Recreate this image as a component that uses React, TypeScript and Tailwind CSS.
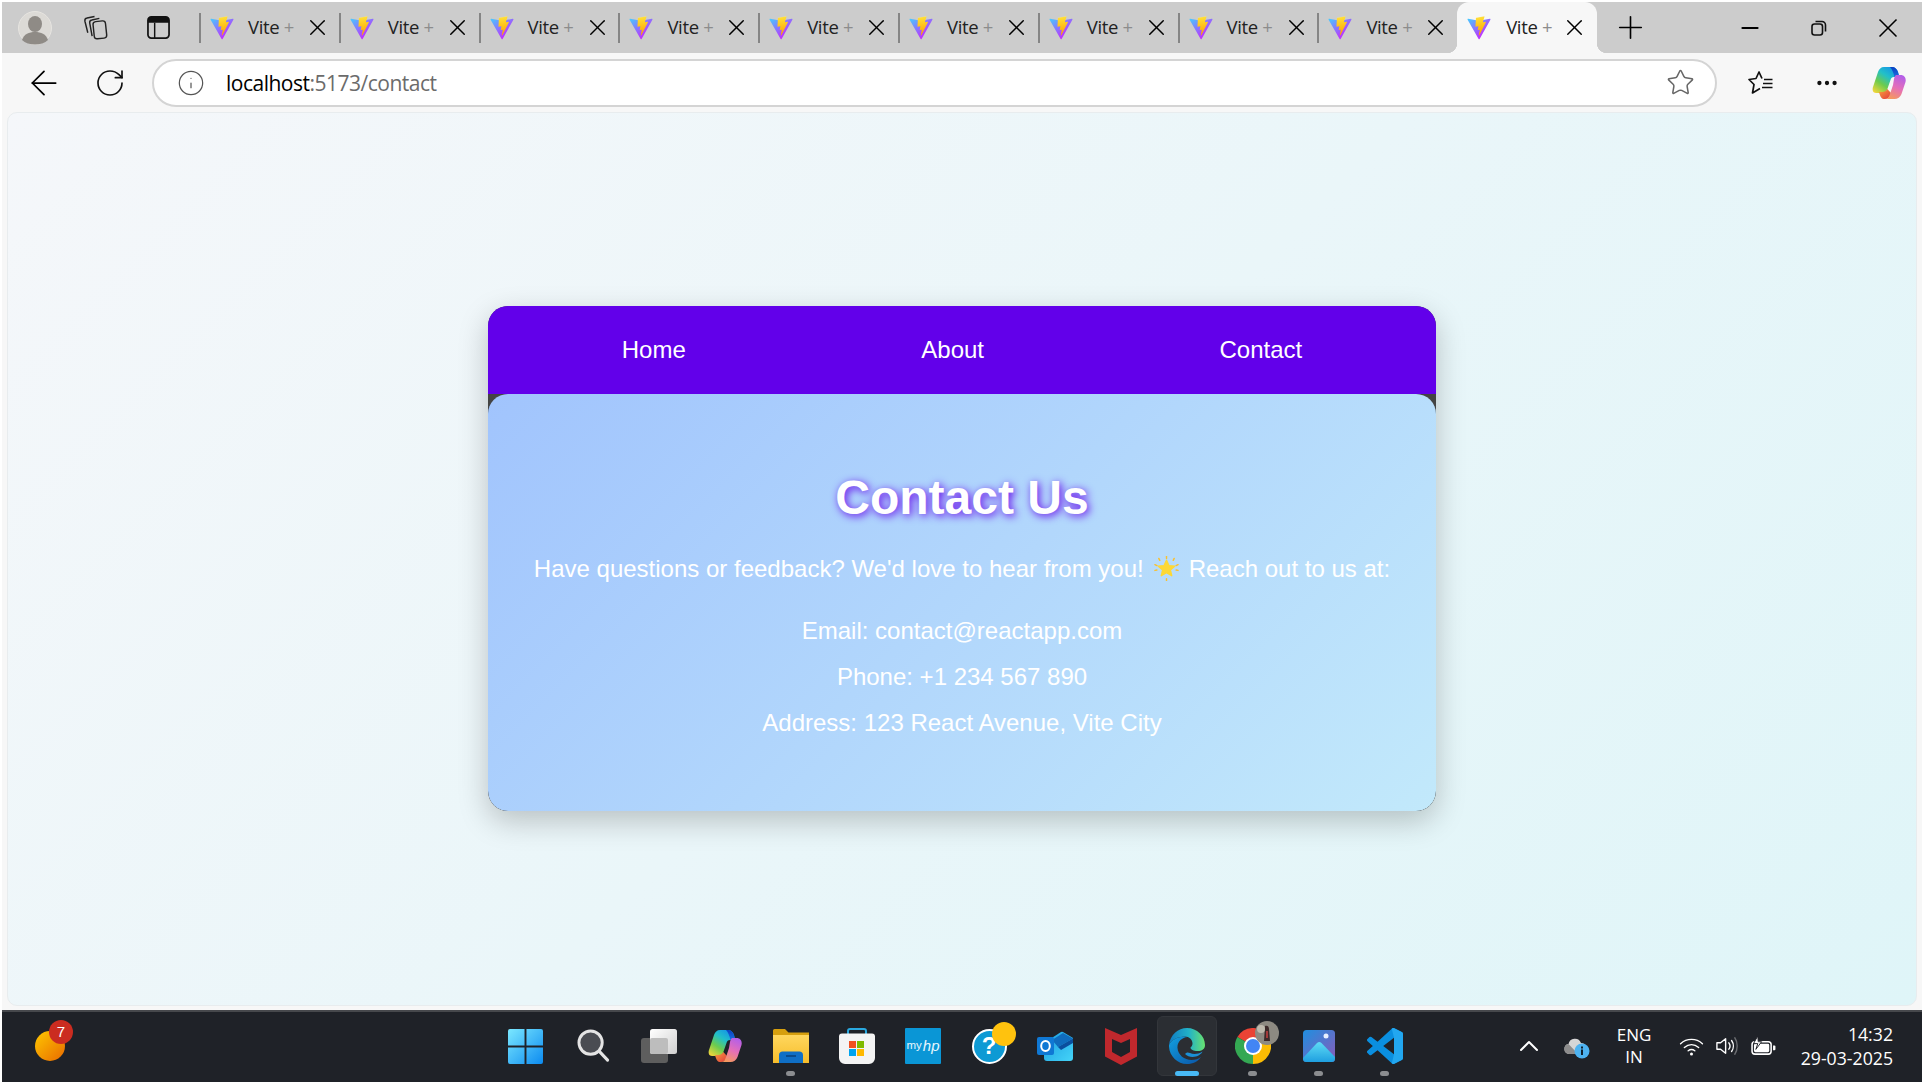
import React from 'react';
import { ArrowLeft, RotateCw, Info, Star, X, Plus, Minus, Ellipsis, ChevronUp } from 'lucide-react';

const chromeFont = "font-['Open_Sans','Noto_Sans',sans-serif]";

const ViteLogo = () => (
  <svg viewBox="0 0 410 404" className="w-[24px] h-[24px] shrink-0">
    <defs>
      <linearGradient id="viteA" x1="6" y1="33" x2="235" y2="344" gradientUnits="userSpaceOnUse">
        <stop stopColor="#41D1FF" />
        <stop offset="1" stopColor="#BD34FE" />
      </linearGradient>
      <linearGradient id="viteB" x1="194" y1="8" x2="236" y2="293" gradientUnits="userSpaceOnUse">
        <stop stopColor="#FFEA83" />
        <stop offset="0.08" stopColor="#FFDD35" />
        <stop offset="1" stopColor="#FFA800" />
      </linearGradient>
    </defs>
    <path d="M399.641 59.5246L215.643 388.545C211.844 395.338 202.084 395.378 198.228 388.618L10.5817 59.5563C6.38087 52.1896 12.6802 43.2665 21.0281 44.7586L205.223 77.6824C206.398 77.8924 207.601 77.8904 208.776 77.6763L389.119 44.8058C397.439 43.2894 403.768 52.1434 399.641 59.5246Z" fill="url(#viteA)" />
    <path d="M292.965 1.5744L156.801 28.2552C154.563 28.6937 152.906 30.5903 152.771 32.8664L144.395 174.33C144.198 177.662 147.258 180.248 150.51 179.498L188.42 170.749C191.967 169.931 195.172 173.055 194.443 176.622L183.18 231.775C182.422 235.487 185.907 238.661 189.532 237.56L212.947 230.446C216.577 229.344 220.065 232.527 219.297 236.242L201.398 322.875C200.278 328.294 207.486 331.249 210.492 326.603L212.5 323.5L323.454 102.072C325.312 98.3645 322.108 94.137 318.036 94.9228L279.014 102.454C275.347 103.161 272.227 99.746 273.262 96.1583L298.731 7.86689C299.767 4.27314 296.636 0.855181 292.965 1.5744Z" fill="url(#viteB)" />
  </svg>
);

const TabLabel = () => (
  <span className="w-[50px] pb-[2px] text-[18.5px] tracking-[-0.35px] whitespace-nowrap text-[#222]">Vite <span className="text-[#8c8c8c]">+</span></span>
);

const Tab = ({ active }: { active?: boolean }) => {
  if (active) {
    return (
      <div className="relative flex items-center w-[140px] h-full shrink-0 bg-[#f7f7f7] rounded-t-[12px] pl-[10px]">
        <span className="absolute -left-[10px] bottom-0 w-[10px] h-[10px] bg-[radial-gradient(circle_at_0_0,#cccccc_10px,#f7f7f7_10.5px)]" />
        <span className="absolute -right-[10px] bottom-0 w-[10px] h-[10px] bg-[radial-gradient(circle_at_100%_0,#cccccc_10px,#f7f7f7_10.5px)]" />
        <ViteLogo />
        <span className="ml-[15px] flex items-center"><TabLabel /></span>
        <X size={27} strokeWidth={1.3} className="ml-[5px] text-black" />
      </div>
    );
  }
  return (
    <div className="flex items-center w-[139.8px] h-full shrink-0">
      <span className="w-[2px] h-[30px] bg-[#858585] shrink-0" />
      <span className="ml-[9px] shrink-0"><ViteLogo /></span>
      <span className="ml-[14px] flex items-center"><TabLabel /></span>
      <X size={27} strokeWidth={1.3} className="ml-[6px] text-black" />
    </div>
  );
};

const Profile = () => (
  <svg viewBox="0 0 34 34" className="w-[34px] h-[34px]">
    <circle cx="17" cy="17" r="16.5" fill="#dcdad6" stroke="#e6e4e0" />
    <ellipse cx="17" cy="13" rx="7" ry="8" fill="#8f8b86" />
    <path d="M4 29c2-6 7-8 13-8s11 2 13 8c-3 3-8 4.5-13 4.5S7 32 4 29Z" fill="#8f8b86" />
  </svg>
);

const Collections = () => (
  <svg viewBox="0 0 26 26" className="w-[25px] h-[25px]" fill="none" stroke="#222" strokeWidth="1.5" strokeLinejoin="round">
    <rect x="11" y="6.5" width="13" height="18" rx="3" transform="rotate(-6 17 15)" />
    <path d="M9.5 22 7 8.5C6.7 6.8 7.6 5.5 9.2 5.2L17 3.5" />
    <path d="M5 18.5 2 6.5C1.7 4.8 2.600 3.500 4.200 3.200L12 1.500" />
  </svg>
);

const VerticalTabs = () => (
  <svg viewBox="0 0 24 24" className="w-[23px] h-[23px]">
    <rect x="1" y="1" width="22" height="22" rx="3.5" fill="none" stroke="#111" strokeWidth="1.8" />
    <path d="M1 4.5A3.5 3.5 0 0 1 4.5 1h15A3.5 3.5 0 0 1 23 4.5V7H1Z" fill="#111" />
    <path d="M8 7v16" stroke="#111" strokeWidth="1.5" />
  </svg>
);

const Restore = () => (
  <svg viewBox="0 0 16 16" className="w-[16px] h-[16px]" fill="none" stroke="#111" strokeWidth="1.6">
    <rect x="1" y="4" width="10.5" height="11" rx="2.5" />
    <path d="M4.5 1.5h6.5a3.5 3.5 0 0 1 3.5 3.5v6.5" />
  </svg>
);

const Favorites = () => (
  <svg viewBox="0 0 25 23" className="w-[25px] h-[23px]" fill="none" stroke="#111" strokeWidth="1.7" strokeLinejoin="round">
    <path d="M14 7.5 11 1 8 7.5 1 8.5 6 13.5 4.5 22 12 17.5" />
    <path d="M16 8.5h8.5M15 12.5h9.5M14 16.5h10.5" />
  </svg>
);

const Copilot = ({ id, size }: { id: string; size: number }) => (
  <svg viewBox="0 0 34 34" style={{ width: size, height: size }}>
    <defs>
      <linearGradient id={id + 'a'} x1="0.8" y1="0" x2="0.1" y2="1">
        <stop stopColor="#1490ea" />
        <stop offset="0.35" stopColor="#22c0c8" />
        <stop offset="0.65" stopColor="#6ccb4e" />
        <stop offset="1" stopColor="#f4d63a" />
      </linearGradient>
      <linearGradient id={id + 'b'} x1="0.7" y1="0" x2="0.3" y2="1">
        <stop stopColor="#b45fe8" />
        <stop offset="0.5" stopColor="#e56fb8" />
        <stop offset="1" stopColor="#f59a5c" />
      </linearGradient>
      <linearGradient id={id + 'c'} x1="0" y1="0" x2="0" y2="1">
        <stop stopColor="#0a3fc0" />
        <stop offset="1" stopColor="#1c6fe0" />
      </linearGradient>
      <linearGradient id={id + 'd'} x1="0" y1="0" x2="1" y2="1">
        <stop stopColor="#f8a33c" />
        <stop offset="1" stopColor="#e2383e" />
      </linearGradient>
    </defs>
    <path d="M12 1H20C23 1 25 3 26 6L27 11H22C20 11 19 12 18.5 14L15 24C14 26 12 27 10 27H4C1 27 0 24 1 21L6 6C7 3 9 1 12 1Z" fill={`url(#${id}a)`} />
    <path d="M18 1H20C23 1 25 3 26 6L27.5 11H22.5C21.5 7 20 3 18 1Z" fill={`url(#${id}c)`} />
    <path d="M7 26H10C12.5 26 14.3 25 15.3 23L19 27C18 31 16 33 13 33H11.5C9.5 33 8 30 7 26Z" fill={`url(#${id}d)`} />
    <path d="M24 9H29C32 9 34.5 12 33.5 16L29.5 28C28.5 31 25.5 33 22.5 33H13C16 33 17 31 18 28L21 19 22 13C22.3 11 23 10 24 9Z" fill={`url(#${id}b)`} />
  </svg>
);

const StarEmoji = () => (
  <svg viewBox="0 0 26 26" className="inline-block w-[25px] h-[25px] mx-[10px]">
    <path d="M13 4.5 15.5 10l6 .5-4.500 4 1.400 6L13 17.300 7.600 20.500l1.400-6-4.500-4 6-.5Z" fill="#fdd835" stroke="#fdd835" strokeWidth="1.5" strokeLinejoin="round" />
    <path d="M13 0v2.500M13 23.500V26M1 9l2 1M23 10l2-1M1 15l2-.5M23 14.500l2 .5M5 2.500l1 2M21 2.500l-1 2" stroke="#fbc02d" strokeWidth="1.5" strokeLinecap="round" />
  </svg>
);

const WindowsLogo = () => (
  <svg viewBox="0 0 36 36" className="w-[35px] h-[35px] mr-[3px]">
    <defs>
      <linearGradient id="winG" x1="0" y1="0" x2="1" y2="1">
        <stop stopColor="#7be8ff" />
        <stop offset="1" stopColor="#0c8bf0" />
      </linearGradient>
    </defs>
    <path d="M2 0h15v17H0V2a2 2 0 0 1 2-2Zm17 0h15a2 2 0 0 1 2 2v15H19ZM0 19h17v17H2a2 2 0 0 1-2-2Zm19 0h17v15a2 2 0 0 1-2 2H19Z" fill="url(#winG)" />
  </svg>
);

const SearchGlyph = () => (
  <svg viewBox="0 0 34 36" className="w-[33px] h-[35px]">
    <circle cx="14" cy="14" r="12" fill="#4a4c52" stroke="#e4e4e4" strokeWidth="3" />
    <path d="M23 23 31.5 32" stroke="#e4e4e4" strokeWidth="3.2" strokeLinecap="round" />
  </svg>
);

const TaskView = () => (
  <svg viewBox="0 0 36 34" className="w-[36px] h-[34px]">
    <defs>
      <linearGradient id="tvA" x1="0" y1="0" x2="1" y2="1">
        <stop stopColor="#ffffff" />
        <stop offset="1" stopColor="#d0d0d0" />
      </linearGradient>
    </defs>
    <rect x="0" y="9" width="27" height="25" rx="3" fill="#5e5e5e" />
    <rect x="9" y="0" width="27" height="25" rx="2.5" fill="url(#tvA)" />
    <rect x="9" y="9" width="18" height="16" rx="2" fill="#bdbdbd" />
  </svg>
);

const Folder = () => (
  <svg viewBox="0 0 36 34" className="w-[36px] h-[34px]">
    <defs>
      <linearGradient id="fdA" x1="0" y1="0" x2="0" y2="1">
        <stop stopColor="#ffd75e" />
        <stop offset="1" stopColor="#f6bd2b" />
      </linearGradient>
    </defs>
    <path d="M1.5 0H12l3.5 3.5H36V8H0V1.5A1.5 1.5 0 0 1 1.5 0Z" fill="#d69f0e" />
    <path d="M0 6h36v28H0Z" fill="url(#fdA)" />
    <path d="M6 34V26c0-2 1.5-3.5 3.5-3.5h17c2 0 3.5 1.5 3.5 3.5v8Z" fill="#0f6fc6" />
    <path d="M13 27h10" stroke="#0a3f78" strokeWidth="1.5" />
  </svg>
);

const Store = () => (
  <svg viewBox="0 0 36 36" className="w-[36px] h-[36px]">
    <path d="M9 6V3a2 2 0 0 1 2-2h14a2 2 0 0 1 2 2v3" fill="none" stroke="#2aa9e0" strokeWidth="2" />
    <path d="M0 8.5A3 3 0 0 1 3 5.500h30a3 3 0 0 1 3 3V30a6 6 0 0 1-6 6H6a6 6 0 0 1-6-6Z" fill="#f4f4f4" />
    <rect x="10" y="13" width="7" height="7" fill="#f25022" />
    <rect x="18" y="13" width="7" height="7" fill="#7fba00" />
    <rect x="10" y="21" width="7" height="7" fill="#00a4ef" />
    <rect x="18" y="21" width="7" height="7" fill="#ffb900" />
  </svg>
);

const MyHp = () => (
  <div className="flex items-center justify-center w-[36px] h-[36px] bg-[#0a96d6] rounded-[1px] text-[#e8f6fd] text-[11.5px] font-['Liberation_Sans',sans-serif]">
    my<span className="italic text-[15px] ml-[1px]">hp</span>
  </div>
);

const Help = () => (
  <div className="relative">
    <div className="flex items-center justify-center w-[35px] h-[35px] rounded-full bg-[#0e9ad4] border-2 border-white text-white text-[24px] font-bold font-['Liberation_Sans',sans-serif]">?</div>
    <span className="absolute -top-[7px] -right-[9px] w-[24px] h-[24px] rounded-full bg-[#ffc20e]" />
  </div>
);

const Outlook = () => (
  <svg viewBox="0 0 36 32" className="w-[36px] h-[32px]">
    <defs>
      <linearGradient id="olA" x1="0" y1="0" x2="1" y2="1">
        <stop stopColor="#1a9be0" />
        <stop offset="1" stopColor="#45d4f8" />
      </linearGradient>
    </defs>
    <path d="M7 13 24 2a2 2 0 0 1 2 0l10 6v20a3 3 0 0 1-3 3H10a3 3 0 0 1-3-3Z" fill="url(#olA)" />
    <path d="M15 10 26 3l10 5.5L21 17Z" fill="#0f6cbd" />
    <path d="M21 17l15-8.500V13L24 20Z" fill="#0b4f9e" />
    <rect x="0" y="7" width="17" height="18" rx="2" fill="#0f78d4" />
    <ellipse cx="8.5" cy="16" rx="4.3" ry="5" fill="none" stroke="#fff" strokeWidth="2" />
  </svg>
);

const McAfee = () => (
  <svg viewBox="0 0 32 37" className="w-[32px] h-[37px]">
    <path fillRule="evenodd" d="M0 0 16 7 32 0V28.5L16 37 0 28.5ZM7 11 16 15 25 11V24L16 29 7 24Z" fill="#c0282d" />
  </svg>
);

const Edge = () => (
  <svg viewBox="0 0 36 36" className="w-[36px] h-[36px]">
    <defs>
      <linearGradient id="edA" x1="0" y1="0.5" x2="1" y2="0.5">
        <stop stopColor="#0f7cc4" />
        <stop offset="0.55" stopColor="#22b2c8" />
        <stop offset="1" stopColor="#68e26f" />
      </linearGradient>
      <linearGradient id="edB" x1="0" y1="0" x2="1" y2="1">
        <stop stopColor="#12a0df" />
        <stop offset="1" stopColor="#0a55a8" />
      </linearGradient>
    </defs>
    <path d="M0 17C1 7 9 0 18 0c10 0 18 8 18 17 0 4-3 6-7.500 6-4 0-7-1.500-7-3.500 1-1 2-2 2-4 0-4-3.500-7-7.500-7C9 8.500 2 12 0 17Z" fill="url(#edA)" />
    <path d="M0 17c2-5 9-8.500 15.500-8.500 1 0 2 .2 3 .6C13 9.500 8 14 8.500 20c.4 7 7 12 14 12 4 0 7-1 9.500-3-3 4.500-8 7-14 7C8 36-.5 27 0 17Z" fill="url(#edB)" />
    <path d="M21 25c3 1.500 8 1.500 12.500-1.500-1 2.500-5 5.500-10 5.500-3 0-5.500-1-7.500-3 1-1.500 3-2 5-1Z" fill="#1a8fd6" />
  </svg>
);

const Chrome = () => (
  <div className="relative">
    <svg viewBox="0 0 36 36" className="w-[36px] h-[36px]">
      <path d="M18 18 2.4 9A18 18 0 0 1 33.6 9Z" fill="#ea4335" />
      <path d="M18 18 33.6 9A18 18 0 0 1 18 36Z" fill="#fbbc04" />
      <path d="M18 18 18 36A18 18 0 0 1 2.4 9Z" fill="#34a853" />
      <circle cx="18" cy="18" r="9" fill="#fff" />
      <circle cx="18" cy="18" r="7" fill="#4285f4" />
    </svg>
    <svg viewBox="0 0 24 24" className="absolute -top-[7px] -right-[8px] w-[24px] h-[24px]">
      <circle cx="12" cy="12" r="12" fill="#8d8a82" />
      <path d="M10 5c2-1 4 0 4 3l1 12H9Z" fill="#3c2a2a" />
      <path d="M11 10h2v7h-2Z" fill="#a33a3a" />
      <circle cx="6" cy="8" r="4" fill="#bdb9ad" />
    </svg>
  </div>
);

const Photos = () => (
  <svg viewBox="0 0 32 32" className="w-[32px] h-[32px]">
    <defs>
      <linearGradient id="phA" x1="0" y1="0" x2="1" y2="1">
        <stop stopColor="#1f8fe0" />
        <stop offset="1" stopColor="#8a5ab8" />
      </linearGradient>
      <linearGradient id="phB" x1="0" y1="0" x2="0" y2="1">
        <stop stopColor="#5fdcf5" />
        <stop offset="1" stopColor="#1f9fe0" />
      </linearGradient>
    </defs>
    <rect width="32" height="32" rx="3.5" fill="url(#phA)" />
    <circle cx="23" cy="6" r="2.5" fill="#e8f0ff" />
    <path d="M0 28 14 13c1.5-1.5 3-1.5 4.5 0L32 27v1.5A3.5 3.5 0 0 1 28.500 32h-25A3.500 3.500 0 0 1 0 28.500Z" fill="url(#phB)" />
  </svg>
);

const VSCode = () => (
  <svg viewBox="0 0 100 100" className="w-[36px] h-[36px]">
    <path d="M96.46 10.8 75.86.87a6.23 6.23 0 0 0-7.1 1.2L29.35 38.1 12.18 25.06a4.16 4.16 0 0 0-5.32.24L1.35 30.3a4.17 4.17 0 0 0 0 6.16L16.24 50 1.35 63.54a4.17 4.17 0 0 0 0 6.16l5.51 5a4.16 4.16 0 0 0 5.32.24L29.35 61.9l39.41 36.03a6.22 6.22 0 0 0 7.1 1.2l20.6-9.91A6.25 6.25 0 0 0 100 83.58V16.42a6.25 6.25 0 0 0-3.54-5.62ZM75 72.7 45.1 50 75 27.3Z" fill="#0a8fe0" />
    <path d="M68.76 2.07a6.23 6.23 0 0 1 7.1-1.2l20.6 9.93A6.25 6.25 0 0 1 100 16.42v67.16a6.25 6.25 0 0 1-3.54 5.64l-20.6 9.91a6.22 6.22 0 0 1-7.1-1.2L75 72.7V27.3Z" fill="#22a7f0" />
  </svg>
);

const CloudInfo = () => (
  <svg viewBox="0 0 26 22" className="w-[26px] h-[22px]">
    <path d="M5 17a5 5 0 0 1-.5-9.9A6.500 6.500 0 0 1 17 6a5 5 0 0 1 3 9v2Z" fill="#d6d6d6" />
    <path d="M5 17a5 5 0 0 1-.5-9.9L14 17Z" fill="#8d8d8d" />
    <circle cx="18" cy="14" r="7.5" fill="#4db2f0" />
    <rect x="17" y="12.5" width="2" height="5.5" fill="#10202c" />
    <rect x="17" y="9.5" width="2" height="2" fill="#10202c" />
  </svg>
);

const WifiGlyph = () => (
  <svg viewBox="0 0 26 20" className="w-[25px] h-[19px]" fill="none" stroke="#fff" strokeWidth="1.5" strokeLinecap="round">
    <path d="M1.5 7C8 1 18 1 24.5 7" />
    <path d="M5.5 11C10 7 16 7 20.5 11" />
    <path d="M9.5 14.5C11.5 13 14.5 13 16.5 14.5" />
    <circle cx="13" cy="18" r="1.6" fill="#fff" stroke="none" />
  </svg>
);

const Speaker = () => (
  <svg viewBox="0 0 24 22" className="w-[24px] h-[22px]" fill="none" stroke="#fff" strokeWidth="1.5" strokeLinejoin="round">
    <path d="M1 7.5h4L10.5 3v16L5 14.5H1Z" />
    <path d="M14 7.5c1.500 2 1.500 5 0 7" strokeLinecap="round" />
    <path d="M17 5c2.500 3.500 2.500 8.500 0 12" strokeLinecap="round" />
    <path d="M20.5 2c3.500 5 3.500 13 0 18" strokeLinecap="round" stroke="#6a6c70" />
  </svg>
);

const Battery = () => (
  <svg viewBox="0 0 26 22" className="w-[25px] h-[21px]" fill="none">
    <rect x="1" y="6" width="20" height="13" rx="3" stroke="#fff" strokeWidth="1.6" />
    <rect x="3" y="8" width="16" height="9" rx="1.5" fill="#fff" />
    <path d="M23 10h1.5a1 1 0 0 1 1 1v3a1 1 0 0 1-1 1H23Z" fill="#fff" />
    <path d="M7 0 2.5 8H7l-2 6 6-8H7.5Z" fill="#fff" stroke="#1f2228" strokeWidth="1" />
  </svg>
);

const TaskIcon = ({ children, mark, active }: { children: React.ReactNode; mark?: boolean; active?: boolean }) => (
  <div className="relative flex items-center justify-center w-[66px] h-[60px] shrink-0">
    {active && <span className="absolute inset-y-0 left-[3px] right-[3px] rounded-[6px] bg-[#2b2e33] border border-[#33363b]" />}
    <span className="relative flex">{children}</span>
    {mark && <span className="absolute bottom-[0px] left-[28px] w-[9px] h-[5px] rounded-full bg-[#8b8d90]" />}
    {active && <span className="absolute bottom-[0px] left-[21px] w-[24px] h-[5px] rounded-full bg-[#48b9f5]" />}
  </div>
);

export default function App() {
  return (
    <div className={`flex flex-col w-[1924px] h-[1084px] overflow-hidden bg-white p-[2px] ${chromeFont}`}>
      {/* tab strip */}
      <div className="flex items-center h-[51px] shrink-0 bg-[#cccccc]">
        <div className="flex items-center w-[197px] shrink-0">
          <div className="flex justify-center w-[66px]"><Profile /></div>
          <div className="flex justify-center w-[54px]"><Collections /></div>
          <div className="flex justify-center w-[72px]"><VerticalTabs /></div>
        </div>
        {Array.from({ length: 9 }).map((_, i) => <Tab key={i} />)}
        <Tab active />
        <div className="flex justify-center w-[67px] shrink-0"><Plus size={37} strokeWidth={1.05} className="text-black" /></div>
        <div className="ml-auto flex items-center">
          <div className="flex justify-center w-[69px]"><Minus size={26} strokeWidth={1.9} className="text-black" /></div>
          <div className="flex justify-center w-[69px]"><Restore /></div>
          <div className="flex justify-center w-[69px]"><X size={32} strokeWidth={1.25} className="text-black" /></div>
        </div>
      </div>

      {/* address bar row */}
      <div className="flex items-center h-[59px] shrink-0 bg-[#f7f7f7]">
        <div className="flex justify-center w-[84px]"><ArrowLeft size={40} strokeWidth={1.05} className="text-black" /></div>
        <div className="flex justify-center w-[48px]"><RotateCw size={32} strokeWidth={1.25} className="text-[#111]" /></div>
        <div className="flex items-center ml-[18px] w-[1565px] h-[48px] bg-white border-2 border-[#d4d4d4] rounded-full pl-[23px] pr-[20px]">
          <Info size={28} strokeWidth={1.05} className="text-[#555]" />
          <span className="ml-[21px] pt-[2px] text-[21px] tracking-[-0.5px] text-black">localhost<span className="text-[#6b6b6b]">:5173/contact</span></span>
          <Star size={29} strokeWidth={1.25} className="ml-auto text-[#666]" />
        </div>
        <div className="flex justify-center w-[86px]"><Favorites /></div>
        <div className="flex justify-center w-[48px]"><Ellipsis size={26} strokeWidth={2} className="text-[#111]" /></div>
        <div className="w-[71px] pl-[21px]"><Copilot id="copA" size={34} /></div>
      </div>

      {/* page */}
      <div className="flex-1 min-h-0 bg-[#f7f7f7] pl-[5px] pr-[5px] pb-[4px]">
        <div className="flex items-center justify-center h-full rounded-[10px] border border-[#e8ecee] bg-[linear-gradient(135deg,#f5f7fa,#dff5f8)] font-['Liberation_Sans',sans-serif]">
          <div className="flex flex-col w-[948px] h-[505px] mb-[2px] rounded-[20px] overflow-hidden bg-[#444444] shadow-[0_10px_30px_rgba(0,0,0,0.22)]">
            <nav className="flex items-center justify-around h-[88px] shrink-0 bg-[#6200ea] px-[16px] text-[24px] text-white">
              <span>Home</span>
              <span>About</span>
              <span>Contact</span>
            </nav>
            <main className="flex-1 flex flex-col items-center rounded-[20px] bg-[linear-gradient(135deg,#a1c4fd,#c2e9fb)] pt-[68px] text-[24px] leading-[36px] text-white">
              <h1 className="text-[48px] leading-[72px] font-bold text-white [text-shadow:2px_2px_8px_#6200ea]">Contact Us</h1>
              <p className="mt-[17px] flex items-center"><span>Have questions or feedback? We'd love to hear from you!</span><StarEmoji /><span>Reach out to us at:</span></p>
              <p className="mt-[26px]">Email: contact@reactapp.com</p>
              <p className="mt-[10px]">Phone: +1 234 567 890</p>
              <p className="mt-[10px]">Address: 123 React Avenue, Vite City</p>
            </main>
          </div>
        </div>
      </div>

      {/* taskbar */}
      <div className="flex items-center h-[72px] shrink-0 pb-[2px] bg-[#1f2228] border-t-2 border-[#46484c] text-white">
        <div className="w-[492px] shrink-0 pl-[33px]">
          <div className="relative w-[30px] h-[30px] rounded-full bg-[linear-gradient(135deg,#ffc800,#e86a00)]">
            <span className="absolute -top-[11px] left-[14px] flex items-center justify-center w-[24px] h-[24px] rounded-full bg-[#cb2c20] text-[15px] text-white font-['Liberation_Sans',sans-serif]">7</span>
          </div>
        </div>
        <div className="flex items-center">
          <TaskIcon><WindowsLogo /></TaskIcon>
          <TaskIcon><SearchGlyph /></TaskIcon>
          <TaskIcon><TaskView /></TaskIcon>
          <TaskIcon><Copilot id="copB" size={34} /></TaskIcon>
          <TaskIcon mark><Folder /></TaskIcon>
          <TaskIcon><Store /></TaskIcon>
          <TaskIcon><MyHp /></TaskIcon>
          <TaskIcon><Help /></TaskIcon>
          <TaskIcon><Outlook /></TaskIcon>
          <TaskIcon><McAfee /></TaskIcon>
          <TaskIcon active><Edge /></TaskIcon>
          <TaskIcon mark><Chrome /></TaskIcon>
          <TaskIcon mark><Photos /></TaskIcon>
          <TaskIcon mark><VSCode /></TaskIcon>
        </div>
        <div className="flex items-center flex-1 min-w-0 pl-[95px]">
          <div className="flex justify-center w-[32px] shrink-0"><ChevronUp size={32} strokeWidth={1.5} /></div>
          <div className="flex justify-center w-[64px] shrink-0 pt-[4px]"><CloudInfo /></div>
          <div className="flex flex-col items-center w-[50px] shrink-0 text-[17px] leading-[22px]">
            <span>ENG</span>
            <span>IN</span>
          </div>
          <div className="flex justify-center w-[50px] shrink-0 ml-[7px]"><WifiGlyph /></div>
          <div className="flex justify-center w-[22px] shrink-0"><Speaker /></div>
          <div className="flex justify-center w-[50px] shrink-0"><Battery /></div>
          <div className="flex flex-col items-end flex-1 pr-[29px] text-[17.7px] leading-[24px]">
            <span>14:32</span>
            <span>29-03-2025</span>
          </div>
        </div>
      </div>
    </div>
  );
}
